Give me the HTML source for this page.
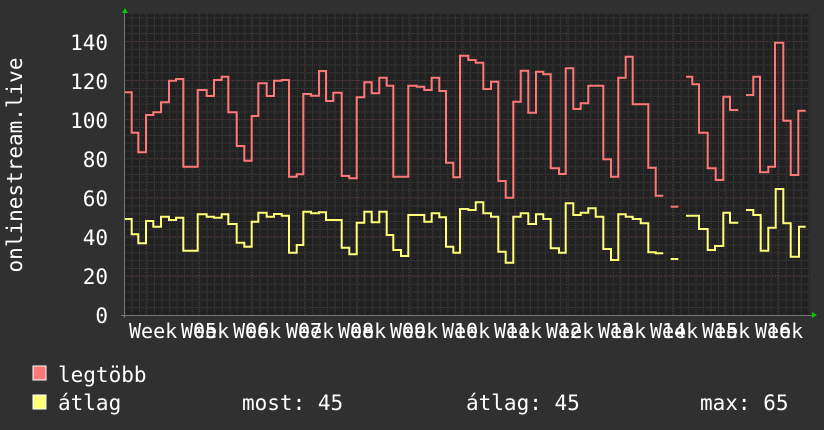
<!DOCTYPE html>
<html><head><meta charset="utf-8"><style>
html,body{margin:0;padding:0;background:#303030;}
svg{display:block}
text{font-family:"DejaVu Sans Mono","Liberation Mono",monospace;fill:#fff;}
</style></head><body>
<svg width="824" height="430" viewBox="0 0 824 430" xmlns="http://www.w3.org/2000/svg">
<defs>
<pattern id="minor" x="124" y="315" width="7.52" height="7.83" patternUnits="userSpaceOnUse">
<line x1="0.5" y1="0" x2="0.5" y2="7.83" stroke="#444" stroke-width="1" stroke-dasharray="1,1"/>
<line x1="0" y1="0.5" x2="7.52" y2="0.5" stroke="#444" stroke-width="1" stroke-dasharray="1,1"/>
</pattern>
</defs>
<rect x="0" y="0" width="824" height="430" fill="#303030"/>
<rect x="124" y="14" width="686" height="301" fill="#212121"/>
<rect x="124" y="14" width="686" height="301" fill="url(#minor)"/>
<g stroke="#5a2e2e" stroke-width="1" stroke-dasharray="1,2">
<line x1="124" y1="41.5" x2="810" y2="41.5"/>
<line x1="124" y1="80.5" x2="810" y2="80.5"/>
<line x1="124" y1="119.5" x2="810" y2="119.5"/>
<line x1="124" y1="158.5" x2="810" y2="158.5"/>
<line x1="124" y1="197.5" x2="810" y2="197.5"/>
<line x1="124" y1="236.5" x2="810" y2="236.5"/>
<line x1="124" y1="275.5" x2="810" y2="275.5"/>
<line x1="145.5" y1="14" x2="145.5" y2="315"/>
<line x1="198.5" y1="14" x2="198.5" y2="315"/>
<line x1="251.5" y1="14" x2="251.5" y2="315"/>
<line x1="304.5" y1="14" x2="304.5" y2="315"/>
<line x1="356.5" y1="14" x2="356.5" y2="315"/>
<line x1="408.5" y1="14" x2="408.5" y2="315"/>
<line x1="461.5" y1="14" x2="461.5" y2="315"/>
<line x1="514.5" y1="14" x2="514.5" y2="315"/>
<line x1="566.5" y1="14" x2="566.5" y2="315"/>
<line x1="619.5" y1="14" x2="619.5" y2="315"/>
<line x1="672.5" y1="14" x2="672.5" y2="315"/>
<line x1="724.5" y1="14" x2="724.5" y2="315"/>
<line x1="777.5" y1="14" x2="777.5" y2="315"/>
</g>
<line x1="121" y1="315.5" x2="812" y2="315.5" stroke="#777" stroke-width="1"/>
<line x1="124.5" y1="12" x2="124.5" y2="318" stroke="#777" stroke-width="1"/>
<polygon points="122,13 125,8 128,13" fill="#0c0"/>
<polygon points="812,312 817,315 812,318" fill="#0c0"/>

<g stroke="#ff7878" stroke-width="2" fill="none">
<polyline points="125,92.3 131.7,92.3 131.7,132.7 138.3,132.7 138.3,152.3 146,152.3 146,115 153.3,115 153.3,112.3 161,112.3 161,102.3 169,102.3 169,80.7 176,80.7 176,79 183.3,79 183.3,166.7 197.7,166.7 197.7,90 206.7,90 206.7,96 214,96 214,80 221.7,80 221.7,76.7 228.3,76.7 228.3,112.3 236.7,112.3 236.7,146 244.3,146 244.3,160.7 251.7,160.7 251.7,116 258.3,116 258.3,83.3 266.7,83.3 266.7,96 274,96 274,80.7 281.7,80.7 281.7,80 289,80 289,176.7 296.7,176.7 296.7,174.3 303.3,174.3 303.3,94 311,94 311,95.7 319,95.7 319,71 326,71 326,101 333.3,101 333.3,92.7 341.7,92.7 341.7,176 349.3,176 349.3,178.3 356.7,178.3 356.7,97.3 364.3,97.3 364.3,82.3 371.7,82.3 371.7,93.3 379.3,93.3 379.3,77.7 386.7,77.7 386.7,85.7 393.3,85.7 393.3,176.7 408.3,176.7 408.3,85.7 416.7,85.7 416.7,86.7 424.3,86.7 424.3,90 431.7,90 431.7,77.7 439.3,77.7 439.3,91 446,91 446,162.7 453.3,162.7 453.3,177.3 460,177.3 460,55.7 468.3,55.7 468.3,60 475.7,60 475.7,62.7 483.3,62.7 483.3,89 491,89 491,81.7 498.3,81.7 498.3,181 505.7,181 505.7,197.7 513.3,197.7 513.3,101.7 520.7,101.7 520.7,70.7 528.3,70.7 528.3,112.7 536,112.7 536,71.7 543.3,71.7 543.3,74.3 550.7,74.3 550.7,168.3 559,168.3 559,174 565.7,174 565.7,68.3 573.3,68.3 573.3,109 580.7,109 580.7,103.3 588.3,103.3 588.3,85.7 603.3,85.7 603.3,159.3 611,159.3 611,176.7 618.3,176.7 618.3,77.7 625.7,77.7 625.7,56.7 632.7,56.7 632.7,104.3 648.3,104.3 648.3,167.7 655.7,167.7 655.7,195.7 663.3,195.7"/>
<polyline points="670.7,206.7 678.3,206.7"/>
<polyline points="686,76.7 692.3,76.7 692.3,84.3 699,84.3 699,132.7 707.7,132.7 707.7,168.3 715.7,168.3 715.7,180 723.3,180 723.3,96.7 730,96.7 730,110 738.3,110"/>
<polyline points="746,95 753.3,95 753.3,76.7 760,76.7 760,172.3 768.3,172.3 768.3,166.7 775,166.7 775,42.7 783.3,42.7 783.3,120.7 790.7,120.7 790.7,175 798.3,175 798.3,110.7 805.7,110.7"/>
</g>
<g stroke="#ffff78" stroke-width="2" fill="none">
<polyline points="125,219 131.7,219 131.7,234.3 138.3,234.3 138.3,243.3 146,243.3 146,221 153.3,221 153.3,226.7 161,226.7 161,216.7 169,216.7 169,220 176,220 176,217.7 183.3,217.7 183.3,250.7 197.7,250.7 197.7,214.3 206.7,214.3 206.7,216.7 214,216.7 214,217.7 221.7,217.7 221.7,214.3 228.3,214.3 228.3,224 236.7,224 236.7,242.7 244.3,242.7 244.3,246.7 251.7,246.7 251.7,221.7 258.3,221.7 258.3,212.7 266.7,212.7 266.7,216.7 274,216.7 274,214 281.7,214 281.7,215.7 289,215.7 289,252.7 296.7,252.7 296.7,245 303.3,245 303.3,211.7 311,211.7 311,213.3 319,213.3 319,212.3 326,212.3 326,220 341.7,220 341.7,247.7 349.3,247.7 349.3,254.3 356.7,254.3 356.7,222.7 364.3,222.7 364.3,211.7 371.7,211.7 371.7,222.3 379.3,222.3 379.3,211.7 386.7,211.7 386.7,235 393.3,235 393.3,250 401,250 401,256 408.3,256 408.3,215 424.3,215 424.3,221.7 431.7,221.7 431.7,213.3 439.3,213.3 439.3,217.3 446,217.3 446,246.7 453.3,246.7 453.3,252.7 460,252.7 460,209 468.3,209 468.3,210 475.7,210 475.7,202.3 483.3,202.3 483.3,213.3 491,213.3 491,216.7 498.3,216.7 498.3,251.7 505.7,251.7 505.7,262.7 513.3,262.7 513.3,216.7 520.7,216.7 520.7,213.3 528.3,213.3 528.3,224 536,224 536,214.3 543.3,214.3 543.3,219 550.7,219 550.7,248.3 559,248.3 559,252.7 565.7,252.7 565.7,203.3 573.3,203.3 573.3,215 580.7,215 580.7,212.7 588.3,212.7 588.3,208.3 595.7,208.3 595.7,216.7 603.3,216.7 603.3,249 611,249 611,260 618.3,260 618.3,214.3 625.7,214.3 625.7,216.7 632.7,216.7 632.7,219 640.7,219 640.7,223.3 648.3,223.3 648.3,252.3 655.7,252.3 655.7,253.3 663.3,253.3"/>
<polyline points="670.7,259 678.3,259"/>
<polyline points="686,215.7 699,215.7 699,229 707.7,229 707.7,250 715,250 715,246 723.3,246 723.3,212.7 730,212.7 730,222.7 738.3,222.7"/>
<polyline points="746,210 753.3,210 753.3,215 760.7,215 760.7,250.7 768.3,250.7 768.3,227.7 775.7,227.7 775.7,189 783.3,189 783.3,223.3 790.7,223.3 790.7,256.7 799,256.7 799,226.7 805.7,226.7"/>
</g>

<g font-size="21" text-anchor="end">
<text x="108" y="50">140</text>
<text x="108" y="89">120</text>
<text x="108" y="128">100</text>
<text x="108" y="167">80</text>
<text x="108" y="206">60</text>
<text x="108" y="245">40</text>
<text x="108" y="284">20</text>
<text x="108" y="323">0</text>
</g>
<text transform="translate(22,165) rotate(-90)" font-size="21" text-anchor="middle">onlinestream.live</text>

<g font-size="20">
<text x="129" y="338">Week</text>
<text x="181" y="338">Week</text><text x="193" y="338">05</text>
<text x="233" y="338">Week</text><text x="245" y="338">06</text>
<text x="286" y="338">Week</text><text x="298" y="338">07</text>
<text x="338" y="338">Week</text><text x="350" y="338">08</text>
<text x="390" y="338">Week</text><text x="402" y="338">09</text>
<text x="442" y="338">Week</text><text x="454" y="338">10</text>
<text x="494" y="338">Week</text><text x="506" y="338">11</text>
<text x="546" y="338">Week</text><text x="558" y="338">12</text>
<text x="598" y="338">Week</text><text x="610" y="338">13</text>
<text x="650" y="338">Week</text><text x="662" y="338">14</text>
<text x="702" y="338">Week</text><text x="714" y="338">15</text>
<text x="755" y="338">Week</text><text x="767" y="338">16</text>
</g>

<rect x="33" y="366" width="13" height="14" fill="#ff7878" stroke="#fff" stroke-width="1"/>
<rect x="33" y="395" width="13" height="14" fill="#ffff78" stroke="#fff" stroke-width="1"/>
<g font-size="21">
<text x="58" y="382">legtöbb</text>
<text x="58" y="410">átlag</text>
<text x="242" y="410">most: 45</text>
<text x="466" y="410">átlag: 45</text>
<text x="700" y="410">max: 65</text>
</g>
</svg>
</body></html>
